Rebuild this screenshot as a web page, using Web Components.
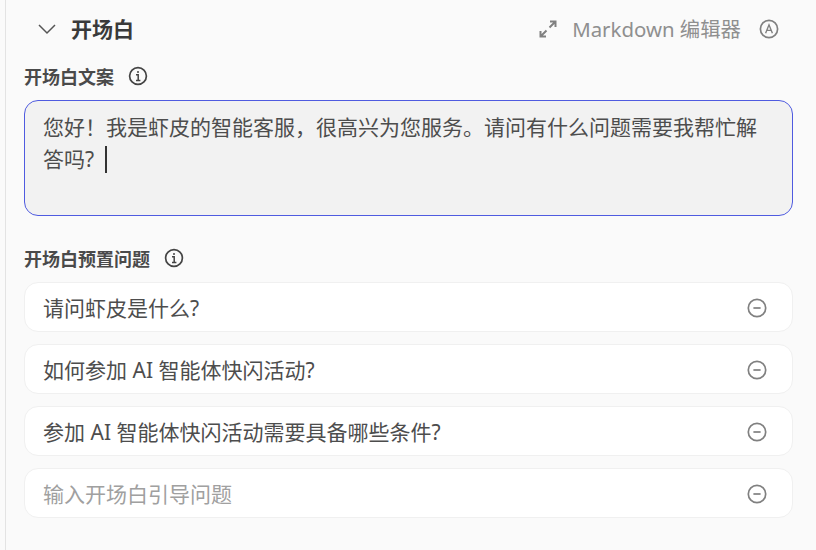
<!DOCTYPE html>
<html lang="zh">
<head>
<meta charset="utf-8">
<style>
    html, body { margin: 0; height: 100%; }
    body {
        width: 816px;
        height: 550px;
        overflow: hidden;
        background: #fafafa;
        font-family: "Noto Sans", "Noto Sans CJK SC", sans-serif;
    }
</style>
</head>
<body>
<opening-panel>
    <panel-header></panel-header>
    <field-label style="margin-top: 6px">开场白文案</field-label>
    <message-box>您好！我是虾皮的智能客服，很高兴为您服务。请问有什么问题需要我帮忙解答吗?</message-box>
    <field-label style="margin-top: 29px; margin-bottom: 11px">开场白预置问题</field-label>
    <question-row>请问虾皮是什么?</question-row>
    <question-row>如何参加 AI 智能体快闪活动?</question-row>
    <question-row>参加 AI 智能体快闪活动需要具备哪些条件?</question-row>
    <question-row placeholder>输入开场白引导问题</question-row>
</opening-panel>

<script>
const FONT = '"Noto Sans", "Noto Sans CJK SC", sans-serif';

class OpeningPanel extends HTMLElement {
    constructor() {
        super();
        this.attachShadow({ mode: 'open' });
    }

    connectedCallback() {
        this.shadowRoot.innerHTML = `
            <style>
                :host {
                    display: flex;
                    flex-direction: column;
                    box-sizing: border-box;
                    height: 550px;
                    margin-left: 5px;
                    padding: 0 23px 0 18px;
                    border-left: 1px solid #e3e3e3;
                    background: #fafafa;
                    font-family: ${FONT};
                }
            </style>
            <slot></slot>
        `;
    }
}

class PanelHeader extends HTMLElement {
    constructor() {
        super();
        this.attachShadow({ mode: 'open' });
    }

    connectedCallback() {
        this.shadowRoot.innerHTML = `
            <style>
                :host {
                    display: flex;
                    align-items: center;
                    height: 57px;
                    padding-left: 12px;
                }
                .chevron { width: 20px; height: 20px; margin-right: 15px; margin-left: 1px; }
                .title { font-size: 21px; font-weight: 700; color: #3a3a3a; margin: 0 0 2px -1px; }
                .right {
                    display: flex;
                    align-items: center;
                    margin-left: auto;
                    margin-right: 14px;
                    color: #8f8f8f;
                    font-size: 20.4px;
                }
                .right span { margin-bottom: 2px; }
                .expand { width: 18px; height: 18px; margin-right: 15px; }
                .auto { width: 20px; height: 20px; margin-left: 18px; }
            </style>
            <svg class="chevron" viewBox="0 0 20 20" fill="none" stroke="#555" stroke-width="1.5">
                <path d="M2 6l8 8 8-8"/>
            </svg>
            <span class="title">开场白</span>
            <div class="right">
                <svg class="expand" viewBox="0 0 18 18" fill="none" stroke="#808080" stroke-width="2">
                    <path d="M11 1.5h5.5V7M16.5 1.5L10.5 7.5M7 16.5H1.5V11M1.5 16.5l6-6"/>
                </svg>
                <span>Markdown 编辑器</span>
                <svg class="auto" viewBox="0 0 20 20" fill="none" stroke="#808080" stroke-width="1.7">
                    <circle cx="10" cy="10" r="8.6"/>
                    <path d="M6.6 14.2L10 5.8l3.4 8.4M7.8 11.4h4.4" stroke-width="1.4"/>
                </svg>
            </div>
        `;
    }
}

class FieldLabel extends HTMLElement {
    constructor() {
        super();
        this.attachShadow({ mode: 'open' });
    }

    connectedCallback() {
        this.shadowRoot.innerHTML = `
            <style>
                :host {
                    display: flex;
                    align-items: center;
                    gap: 14px;
                    height: 26px;
                    font-size: 18px;
                    font-weight: 700;
                    color: #4a4a4a;
                }
                svg { width: 20px; height: 20px; }
            </style>
            <slot></slot>
            <svg viewBox="0 0 20 20" fill="none" stroke="#444" stroke-width="1.7">
                <circle cx="10" cy="10" r="8.4"/>
                <path d="M8 8.8h2.2V14.4M8 14.6h4.4" stroke-width="1.5"/>
                <circle cx="10" cy="5.9" r="1" fill="#444" stroke="none"/>
            </svg>
        `;
    }
}

class MessageBox extends HTMLElement {
    constructor() {
        super();
        this.attachShadow({ mode: 'open' });
    }

    connectedCallback() {
        this.shadowRoot.innerHTML = `
            <style>
                :host {
                    display: block;
                    box-sizing: border-box;
                    height: 116px;
                    margin-top: 11px;
                    padding: 10px 18px;
                    border: 1px solid #4f5be0;
                    border-radius: 14px;
                    background: #f2f2f2;
                    color: #4d4d4d;
                    font-size: 21px;
                    line-height: 32px;
                }
                .caret {
                    display: inline-block;
                    width: 2px;
                    height: 27px;
                    margin-left: 11px;
                    background: #333;
                    vertical-align: -6px;
                }
            </style>
            <slot></slot><span class="caret"></span>
        `;
    }
}

class QuestionRow extends HTMLElement {
    constructor() {
        super();
        this.attachShadow({ mode: 'open' });
    }

    connectedCallback() {
        this.shadowRoot.innerHTML = `
            <style>
                :host {
                    display: flex;
                    align-items: center;
                    box-sizing: border-box;
                    height: 50px;
                    margin-bottom: 12px;
                    padding: 0 25px 0 18px;
                    border: 1px solid #f0f0f0;
                    border-radius: 14px;
                    background: #fff;
                    color: #4d4d4d;
                    font-size: 21px;
                }
                :host([placeholder]) { color: #a0a0a0; }
                .text { flex: 1; }
                svg { width: 20px; height: 20px; margin-top: 2px; }
            </style>
            <span class="text"><slot></slot></span>
            <svg viewBox="0 0 20 20" fill="none" stroke="#808080" stroke-width="1.7">
                <circle cx="10" cy="10" r="8.7"/>
                <path d="M6.4 10h7.2" stroke-width="1.7"/>
            </svg>
        `;
    }
}

customElements.define('opening-panel', OpeningPanel);
customElements.define('panel-header', PanelHeader);
customElements.define('field-label', FieldLabel);
customElements.define('message-box', MessageBox);
customElements.define('question-row', QuestionRow);
</script>
</body>
</html>
